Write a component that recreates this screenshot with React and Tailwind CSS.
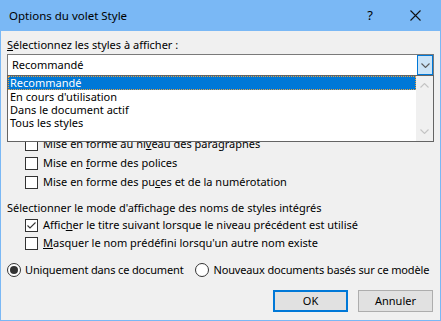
import { useState } from 'react';

const font = { fontFamily: '"Noto Sans", "Liberation Sans", sans-serif' };

function Box({ checked }) {
  return (
    <span className="w-[13px] h-[13px] border border-[#333333] bg-white flex items-center justify-center shrink-0">
      {checked && (
        <svg width="11" height="11" viewBox="0 0 11 11">
          <path d="M1.5 5.5 L4 8 L9.5 2.5" fill="none" stroke="#333" strokeWidth="1.1" />
        </svg>
      )}
    </span>
  );
}

function Check({ checked, h = 'h-[19px]', children }) {
  return (
    <div className={`flex items-center gap-[5px] ml-[18px] ${h}`}>
      <Box checked={checked} />
      <span>{children}</span>
    </div>
  );
}

function Radio({ on, children }) {
  return (
    <div className="flex items-center gap-[4px]">
      <span className="w-[14px] h-[14px] rounded-full border border-[#333333] bg-white flex items-center justify-center shrink-0">
        {on && <span className="w-[8px] h-[8px] rounded-full bg-[#333333]" />}
      </span>
      <span className="whitespace-nowrap">{children}</span>
    </div>
  );
}

function Chevron({ up, color }) {
  return (
    <svg width="9" height="5" viewBox="0 0 9 5">
      <path d={up ? 'M0.5 4.5 L4.5 0.5 L8.5 4.5' : 'M0.5 0.5 L4.5 4.5 L8.5 0.5'} fill="none" stroke={color} strokeWidth="1.1" />
    </svg>
  );
}

const items = ['Recommandé', "En cours d'utilisation", 'Dans le document actif', 'Tous les styles'];

export default function App() {
  const [sel] = useState(0);

  return (
    <div className="w-[441px] h-[321px] bg-[#f0f0f0] text-[11px] text-black flex flex-col border border-t-0 border-[#7ab8f5] overflow-hidden" style={font}>
      <div className="h-[31px] bg-[#7ab8f5] flex items-center shrink-0">
        <span className="ml-[8px] flex-1 text-[11.5px]">Options du volet Style</span>
        <span className="w-[44px] text-center text-[13px]">?</span>
        <span className="w-[46px] flex justify-center mr-[2px]">
          <svg width="11" height="11" viewBox="0 0 11 11">
            <path d="M0.5 0.5 L10.5 10.5 M10.5 0.5 L0.5 10.5" stroke="#111" strokeWidth="1.1" />
          </svg>
        </span>
      </div>

      <div className="flex-1 flex flex-col px-[6px]">
        <div className="h-[16px] leading-[16px] mt-[6px]">
          <u>S</u>électionnez les styles à afficher :
        </div>
        <div className="relative mt-[1px]">
          <div className="h-[22px] border border-[#7a7a7a] bg-white flex items-center">
            <span className="ml-[4px] flex-1">{items[sel]}</span>
            <span className="w-[16px] h-[20px] border border-[#0078d7] bg-[#cce4f7] flex items-center justify-center">
              <Chevron color="#5a5a5a" />
            </span>
          </div>
          <div className="absolute left-0 right-0 top-[21px] h-[67px] border border-[#646464] bg-white flex z-10">
            <div className="flex-1 flex flex-col">
              {items.map((t, i) => (
                <div
                  key={t}
                  className={
                    i === 0
                      ? 'h-[14px] leading-[12px] pl-[1px] bg-[#0078d7] text-white border border-dotted border-[#e8a040]'
                      : 'h-[13px] leading-[13px] pl-[2px]'
                  }
                >
                  {t}
                </div>
              ))}
            </div>
            <div className="w-[17px] bg-[#f0f0f0] flex flex-col items-center justify-between py-[7px]">
              <Chevron up color="#c4c4c4" />
              <Chevron color="#c4c4c4" />
            </div>
          </div>
        </div>

        <div className="mt-[59px]">
          <Check>Mise en forme au ni<u>v</u>eau des paragraphes</Check>
          <Check>Mise en <u>f</u>orme des polices</Check>
          <Check>Mise en forme des pu<u>c</u>es et de la numérotation</Check>
        </div>

        <div className="h-[16px] leading-[16px] mt-[8px]">
          Sélectionner le mode d'affichage des noms de styles intégrés
        </div>
        <Check checked h="h-[18px]">Affic<u>h</u>er le titre suivant lorsque le niveau précédent est utilisé</Check>
        <Check h="h-[18px]"><u>M</u>asquer le nom prédéfini lorsqu'un autre nom existe</Check>

        <div className="h-[18px] mt-[9px] flex items-center gap-[12px] tracking-[-0.15px]">
          <Radio on>Uniquement dans ce document</Radio>
          <Radio>Nouveaux documents basés sur ce modèle</Radio>
        </div>

        <div className="mt-[11px] flex justify-end gap-[10px] mr-[1px]">
          <button className="w-[75px] h-[22px] bg-[#e1e1e1] border-2 border-[#0078d7]">OK</button>
          <button className="w-[75px] h-[22px] bg-[#e1e1e1] border border-[#adadad]">Annuler</button>
        </div>
      </div>
    </div>
  );
}
